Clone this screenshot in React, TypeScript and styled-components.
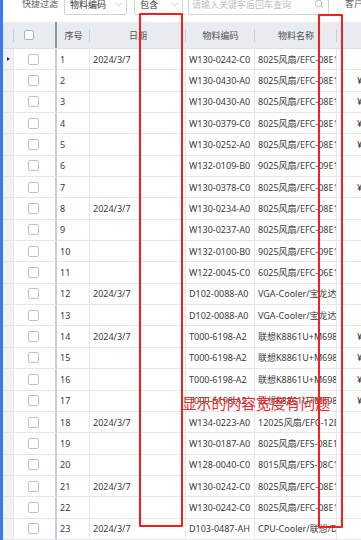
import React from "react";
import styled, { createGlobalStyle } from "styled-components";
import { ChevronDown, Search } from "lucide-react";

const GlobalStyle = createGlobalStyle`
  html, body {
    margin: 0;
    padding: 0;
    background: #fff;
    overflow: hidden;
  }
  body {
    font-family: "Noto Sans", "Noto Sans CJK SC", sans-serif;
  }
`;

interface IRow {
  no: number
  date?: string
  code: string
  name: string
  price?: boolean
}

const rows: IRow[] = [
  { no: 1, date: "2024/3/7", code: "W130-0242-C0", name: "8025风扇/EFC-08E12" },
  { no: 2, code: "W130-0430-A0", name: "8025风扇/EFC-08E12", price: true },
  { no: 3, code: "W130-0430-A0", name: "8025风扇/EFC-08E12", price: true },
  { no: 4, code: "W130-0379-C0", name: "8025风扇/EFC-08E12", price: true },
  { no: 5, code: "W130-0252-A0", name: "8025风扇/EFC-08E12", price: true },
  { no: 6, code: "W132-0109-B0", name: "9025风扇/EFC-09E12" },
  { no: 7, code: "W130-0378-C0", name: "8025风扇/EFC-08E12", price: true },
  { no: 8, date: "2024/3/7", code: "W130-0234-A0", name: "8025风扇/EFC-08E12" },
  { no: 9, code: "W130-0237-A0", name: "8025风扇/EFC-08E12" },
  { no: 10, code: "W132-0100-B0", name: "9025风扇/EFC-09E12" },
  { no: 11, code: "W122-0045-C0", name: "6025风扇/EFC-06E12" },
  { no: 12, date: "2024/3/7", code: "D102-0088-A0", name: "VGA-Cooler/宝龙达/" },
  { no: 13, code: "D102-0088-A0", name: "VGA-Cooler/宝龙达/" },
  { no: 14, date: "2024/3/7", code: "T000-6198-A2", name: "联想K8861U+M698U", price: true },
  { no: 15, code: "T000-6198-A2", name: "联想K8861U+M698U", price: true },
  { no: 16, code: "T000-6198-A2", name: "联想K8861U+M698U", price: true },
  { no: 17, code: "T000-6198-A2", name: "联想K8861U+M698U", price: true },
  { no: 18, date: "2024/3/7", code: "W134-0223-A0", name: "12025风扇/EFC-12E12" },
  { no: 19, code: "W130-0187-A0", name: "8025风扇/EFS-08E12" },
  { no: 20, code: "W128-0040-C0", name: "8015风扇/EFS-08C12" },
  { no: 21, date: "2024/3/7", code: "W130-0242-C0", name: "8025风扇/EFC-08E12" },
  { no: 22, code: "W130-0242-C0", name: "8025风扇/EFC-08E12" },
  { no: 23, date: "2024/3/7", code: "D103-0487-AH", name: "CPU-Cooler/联想/DI" },
  { no: 24, code: "", name: "" },
]

const COLS = "11px 43px 33px 96px 69px 82px 40px"

export default function App() {
  return (
    <>
      <GlobalStyle />
      <Page>
        <SideStrip />
        <Main>
          <Toolbar>
            <Label w={61}>快捷过滤</Label>
            <Select w={63}>
              <span>物料编码</span>
              <ChevronDown size={11} strokeWidth={1.3} color="#a8a8a8" />
            </Select>
            <Select w={49}>
              <span>包含</span>
              <ChevronDown size={11} strokeWidth={1.3} color="#a8a8a8" />
            </Select>
            <SearchBox>
              <span>请输入关键字后回车查询</span>
              <Search size={10} strokeWidth={1.5} color="#9a9a9a" />
            </SearchBox>
            <Label>客户名称</Label>
          </Toolbar>

          <Grid>
            <HeadRow>
              <HeadCell />
              <HeadCell frozen>
                <Check head />
              </HeadCell>
              <HeadCell>序号</HeadCell>
              <HeadCell>日期</HeadCell>
              <HeadCell>物料编码</HeadCell>
              <HeadCell>物料名称</HeadCell>
              <HeadCell />
            </HeadRow>
            {rows.map((r) => (
              <BodyRow key={r.no}>
                <IndicatorCell>{r.no === 1 && <Arrow />}</IndicatorCell>
                <Cell frozen>
                  <Check />
                </Cell>
                <Cell>{r.no < 24 ? r.no : ""}</Cell>
                <Cell>{r.date}</Cell>
                <Cell>{r.code}</Cell>
                <Cell>{r.name}</Cell>
                <Cell price>{r.price ? "¥" : ""}</Cell>
              </BodyRow>
            ))}
          </Grid>
        </Main>

        <RedBox style={{ left: 139, top: 13, width: 44, height: 514 }} />
        <RedBox style={{ left: 318, top: 14, width: 25, height: 514 }} />
        <RedNote>显示的内容宽度有问题</RedNote>
      </Page>
    </>
  )
}

const Page = styled.div`
  position: relative;
  width: 361px;
  height: 540px;
  overflow: hidden;
  display: flex;
  background: #fff;
`

const SideStrip = styled.div`
  width: 3px;
  flex-shrink: 0;
  background: #3a7bec;
`

const Main = styled.div`
  flex: 1;
  min-width: 0;
  display: flex;
  flex-direction: column;
`

const Toolbar = styled.div`
  margin-top: -7px;
  height: 29px;
  flex-shrink: 0;
  display: flex;
  align-items: flex-start;
  gap: 7px;
  white-space: nowrap;
  font-size: 9px;
`

const Label = styled.div<{ w?: number }>`
  width: ${p => (p.w ? `${p.w - 7}px` : "auto")};
  flex-shrink: 0;
  box-sizing: border-box;
  padding-left: ${p => (p.w ? "19px" : "9px")};
  height: 22px;
  line-height: 22px;
  color: #606060;
  font-size: 9px;
`

const Select = styled.div<{ w: number }>`
  width: ${p => p.w}px;
  flex-shrink: 0;
  height: 22px;
  box-sizing: border-box;
  border: 1px solid #d4d4d4;
  border-radius: 2px;
  display: flex;
  align-items: center;
  justify-content: space-between;
  padding: 0 2px 0 5px;
  color: #333;
  font-size: 9px;
  background: #fff;
`

const SearchBox = styled.div`
  width: 141px;
  flex-shrink: 0;
  margin-left: -2px;
  height: 22px;
  box-sizing: border-box;
  border: 1px solid #d4d4d4;
  border-radius: 2px;
  display: flex;
  align-items: center;
  justify-content: space-between;
  padding: 0 4px 0 3px;
  color: #c0c0c0;
  font-size: 9px;
`

const Grid = styled.div`
  display: flex;
  flex-direction: column;
`

const HeadRow = styled.div`
  display: grid;
  grid-template-columns: ${COLS};
  height: 27px;
  background: #e8ebf0;
  border-bottom: 1px solid #dde1e7;
  box-sizing: border-box;
`

const HeadCell = styled.div<{ frozen?: boolean }>`
  position: relative;
  display: flex;
  align-items: center;
  justify-content: ${p => (p.frozen ? "flex-start" : "center")};
  padding-left: ${p => (p.frozen ? "10px" : "0")};
  font-size: 9px;
  color: #505050;
  white-space: nowrap;
  overflow: hidden;
  box-sizing: border-box;
  border-right: ${p => (p.frozen ? "2px solid #8e949c" : "none")};

  &::after {
    content: "";
    display: ${p => (p.frozen ? "none" : "block")};
    position: absolute;
    right: 0;
    top: 7px;
    width: 1px;
    height: 13px;
    background: #c9cdd4;
  }
`

const BodyRow = styled.div`
  display: grid;
  grid-template-columns: ${COLS};
  height: 21.35px;
  flex-shrink: 0;
`

const Cell = styled.div<{ frozen?: boolean; price?: boolean }>`
  box-sizing: border-box;
  display: flex;
  align-items: center;
  padding-left: ${p => (p.frozen ? "14px" : p.price ? "20px" : "3px")};
  font-size: 9px;
  color: #3a3a3a;
  white-space: nowrap;
  overflow: hidden;
  border-bottom: 1px solid #e4e7ec;
  border-right: ${p => (p.frozen ? "2px solid #c4cddc" : "1px solid #e4e7ec")};
`

const IndicatorCell = styled.div`
  box-sizing: border-box;
  display: flex;
  align-items: center;
  padding-left: 4px;
  background: #f2f3f5;
  border-bottom: 1px solid #e4e7ec;
  border-right: 1px solid #e4e7ec;
`

const Arrow = styled.div`
  width: 0;
  height: 0;
  border-top: 2.5px solid transparent;
  border-bottom: 2.5px solid transparent;
  border-left: 3px solid #1d3563;
`

const Check = styled.div<{ head?: boolean }>`
  width: ${p => (p.head ? 10 : 11)}px;
  height: ${p => (p.head ? 10 : 11)}px;
  box-sizing: border-box;
  border: 1px solid ${p => (p.head ? "#aab2bf" : "#bcc3ce")};
  border-radius: 2px;
  background: #fff;
`

const RedBox = styled.div`
  position: absolute;
  box-sizing: border-box;
  border: 2px solid #f51f1f;
  border-radius: 1px;
  pointer-events: none;
`

const RedNote = styled.div`
  position: absolute;
  left: 182px;
  top: 394px;
  font-family: "Noto Sans CJK SC", sans-serif;
  font-size: 14.8px;
  line-height: 17px;
  color: #f42828;
  white-space: nowrap;
`
